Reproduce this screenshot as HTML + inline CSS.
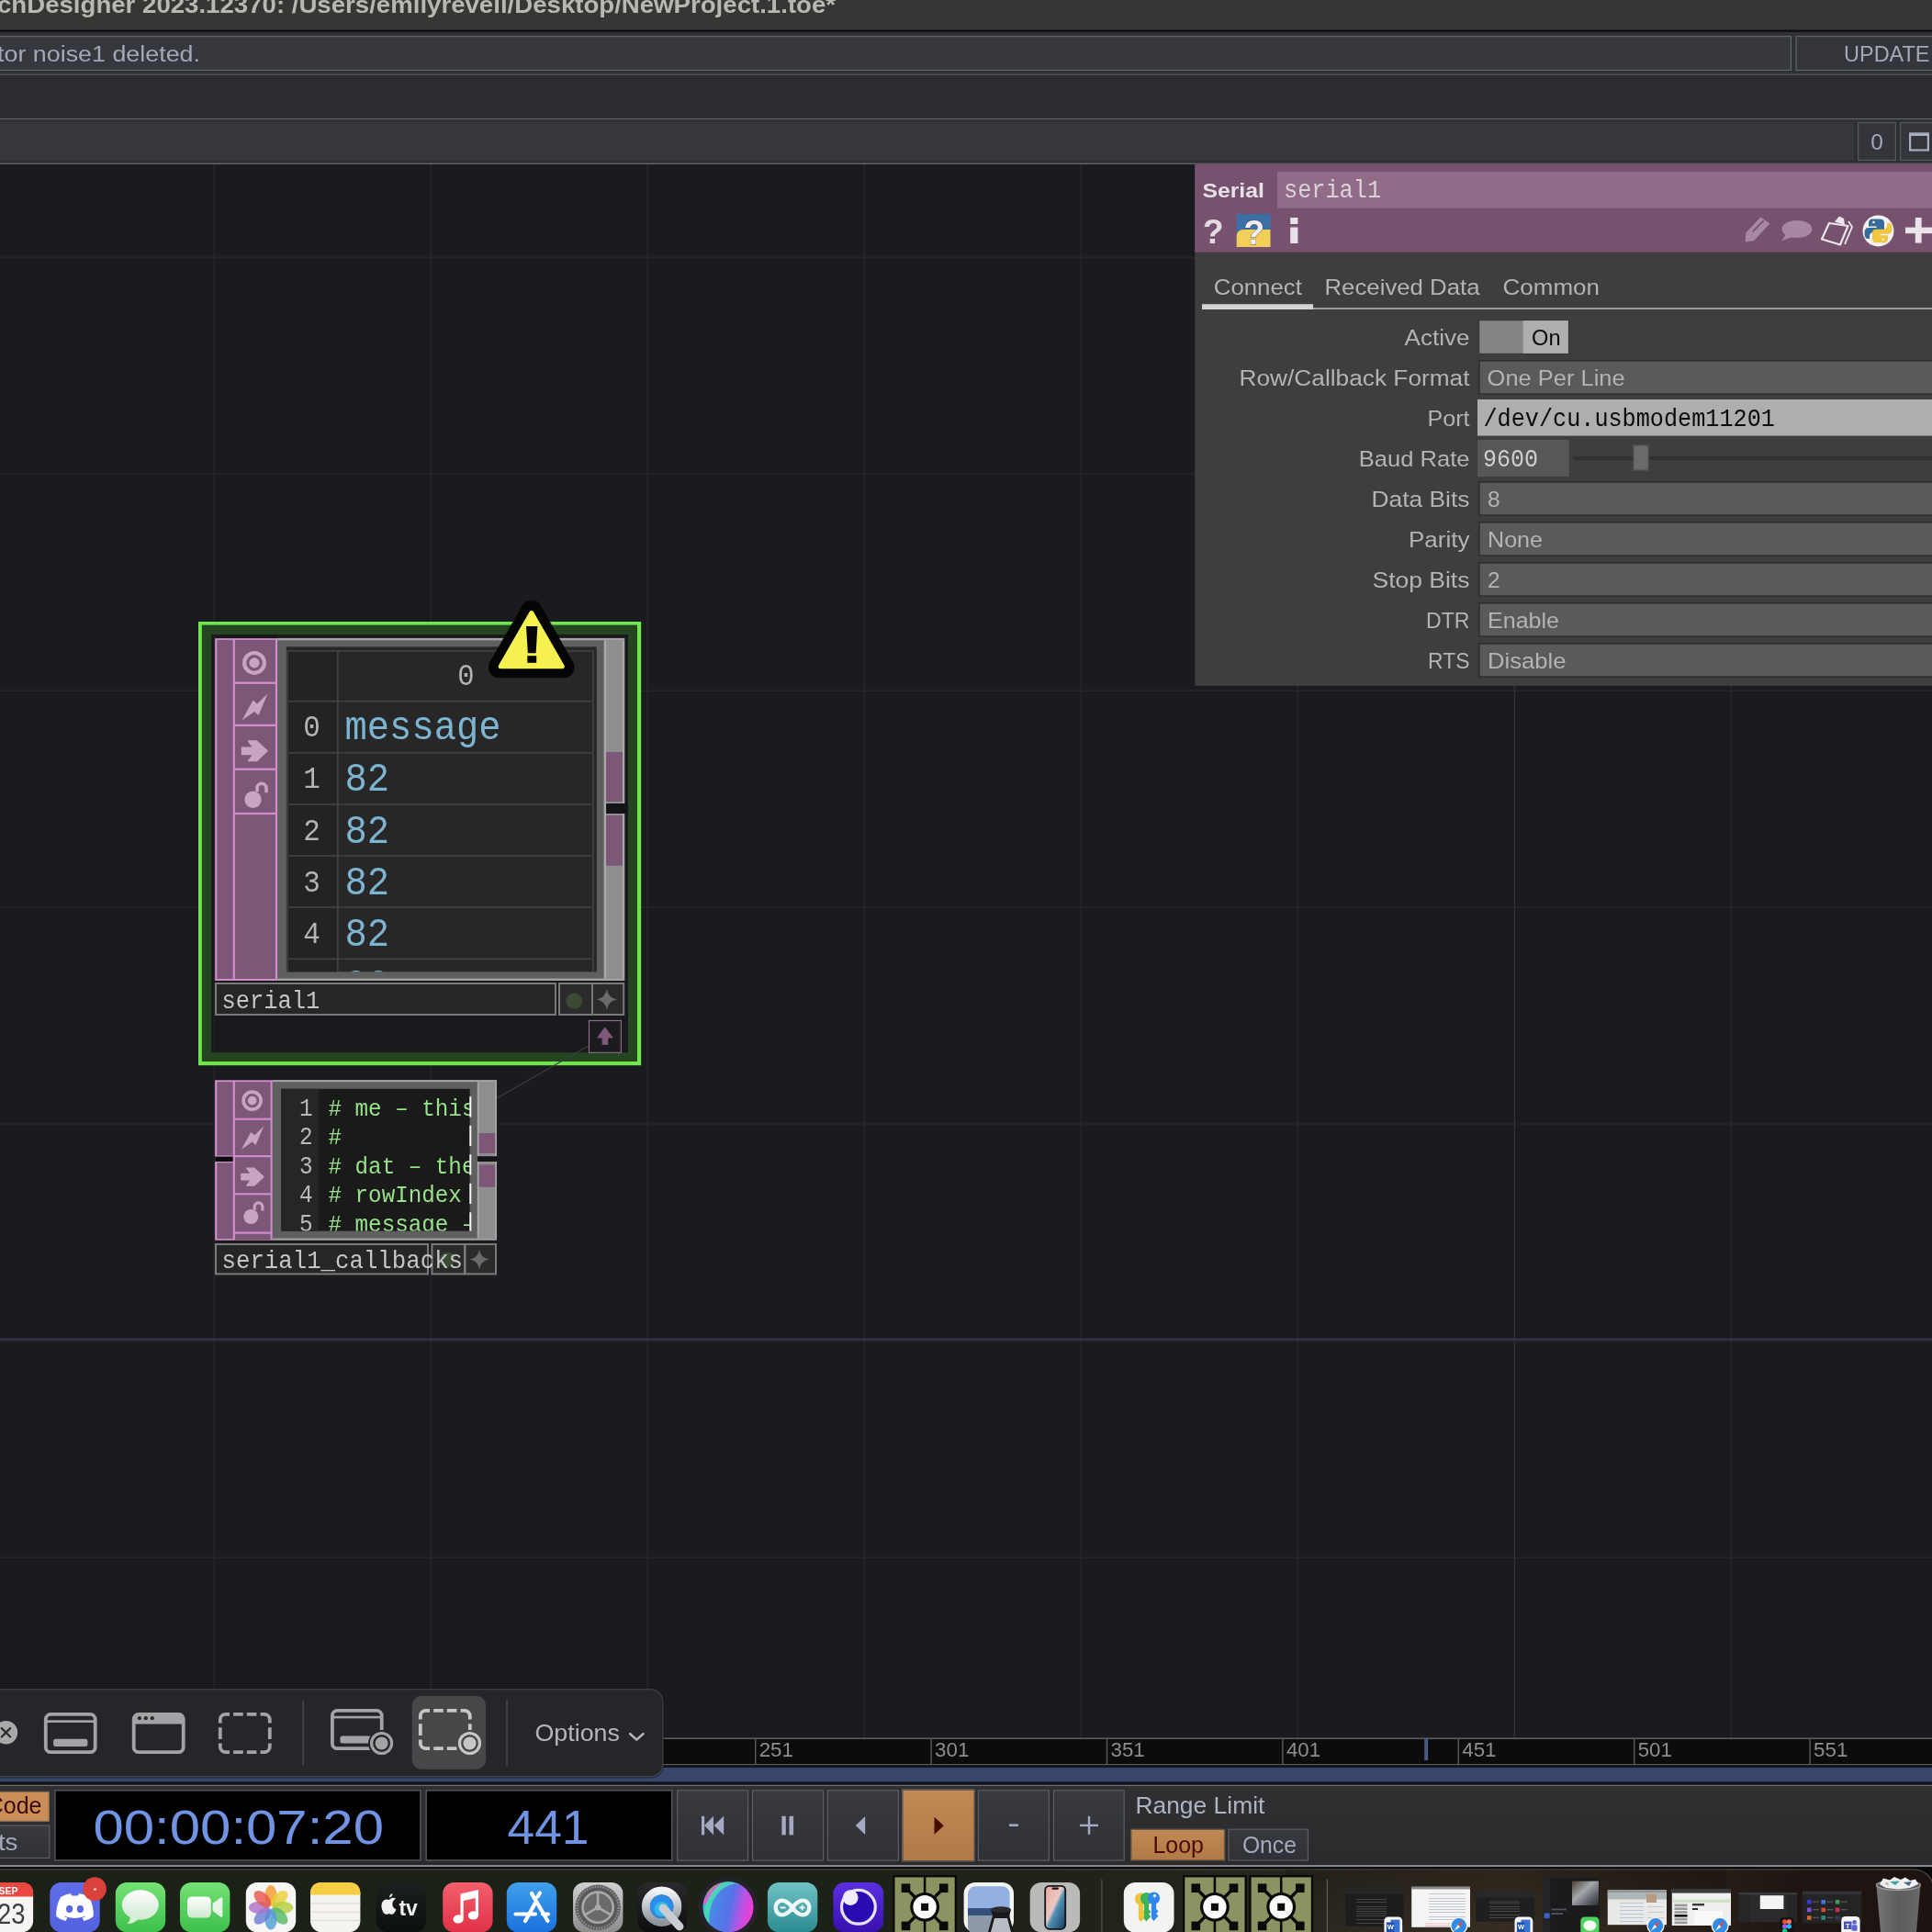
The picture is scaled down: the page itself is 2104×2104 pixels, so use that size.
<!DOCTYPE html>
<html><head><meta charset="utf-8"><title>TouchDesigner</title>
<style>
html,body{margin:0;padding:0;background:#1a1b1f;overflow:hidden;}
svg{display:block;will-change:transform;}
text{white-space:pre;}
</style></head><body>
<svg width="2104" height="2104" viewBox="0 0 2104 2104" font-family="Liberation Sans, sans-serif">
<rect x="0.0" y="0.0" width="2104.0" height="2104.0" fill="#1a1b1f" />
<rect x="0.0" y="0.0" width="2104.0" height="32.8" fill="#373634" />
<text transform="translate(-3,13.8) scale(1.105,1)" font-family="Liberation Sans, sans-serif" font-size="25" font-weight="bold" fill="#b9b7b4">chDesigner 2023.12370: /Users/emilyrevell/Desktop/NewProject.1.toe*</text>
<rect x="0.0" y="32.6" width="2104.0" height="2.2" fill="#0c0c0d" />
<rect x="0.0" y="34.8" width="2104.0" height="46.2" fill="#2f3135" />
<rect x="-4.40" y="39.60" width="1954.80" height="36.80" fill="#36383d" stroke="#62656c" stroke-width="1.2" />
<text transform="translate(-3.0,67.0) scale(1.0963,1)" textLength="201.6" lengthAdjust="spacing" font-family="Liberation Sans, sans-serif" font-size="24.5" font-weight="normal" fill="#a3a8b8" >tor noise1 deleted.</text>
<rect x="1956.10" y="39.60" width="163.30" height="36.80" fill="#33353a" stroke="#62656c" stroke-width="1.2" />
<text transform="translate(2008.0,67.0) scale(0.9584,1)" textLength="97.6" lengthAdjust="spacing" font-family="Liberation Sans, sans-serif" font-size="24.5" font-weight="normal" fill="#a3a8b8" >UPDATE</text>
<rect x="0.0" y="80.6" width="2104.0" height="1.2" fill="#66686e" />
<rect x="0.0" y="81.8" width="2104.0" height="47.2" fill="#2c2d30" />
<rect x="0.0" y="129.0" width="2104.0" height="1.2" fill="#66686e" />
<rect x="0.0" y="130.2" width="2104.0" height="47.8" fill="#2e3034" />
<rect x="0.0" y="132.5" width="2019.0" height="42.5" fill="#35373c" />
<rect x="2023.60" y="133.60" width="40.80" height="40.80" fill="#33353a" stroke="#55585f" stroke-width="1.2" />
<text x="2044.0" y="162.9" font-family="Liberation Sans, sans-serif" font-size="24.5" font-weight="normal" fill="#a3a8b8" text-anchor="middle" >0</text>
<rect x="2069.60" y="133.60" width="49.80" height="40.80" fill="#33353a" stroke="#55585f" stroke-width="1.2" />
<rect x="2079.0" y="144.4" width="22.0" height="3.6" fill="#a9aec2" />
<rect x="2080.1" y="146" width="19.8" height="17.5" fill="none" stroke="#a9aec2" stroke-width="2.2"/>
<rect x="0.0" y="177.6" width="2104.0" height="1.4" fill="#63656b" />
<rect x="0.0" y="179.0" width="2104.0" height="1714.0" fill="#1a1b1f" />
<rect x="232.8" y="179.0" width="1.2" height="1714.0" fill="#27282d" />
<rect x="468.8" y="179.0" width="1.2" height="1714.0" fill="#27282d" />
<rect x="704.8" y="179.0" width="1.2" height="1714.0" fill="#27282d" />
<rect x="940.8" y="179.0" width="1.2" height="1714.0" fill="#27282d" />
<rect x="1176.8" y="179.0" width="1.2" height="1714.0" fill="#27282d" />
<rect x="1412.8" y="179.0" width="1.2" height="1714.0" fill="#27282d" />
<rect x="1648.8" y="179.0" width="1.2" height="1714.0" fill="#31323b" />
<rect x="1884.8" y="179.0" width="1.2" height="1714.0" fill="#27282d" />
<rect x="0.0" y="279.5" width="2104.0" height="1.2" fill="#27282d" />
<rect x="0.0" y="515.4" width="2104.0" height="1.2" fill="#27282d" />
<rect x="0.0" y="751.6" width="2104.0" height="1.2" fill="#27282d" />
<rect x="0.0" y="987.5" width="2104.0" height="1.2" fill="#27282d" />
<rect x="0.0" y="1223.4" width="2104.0" height="1.2" fill="#27282d" />
<rect x="0.0" y="1695.6" width="2104.0" height="1.2" fill="#27282d" />
<rect x="0.0" y="1457.7" width="2104.0" height="1.8" fill="#39374f" />
<rect x="0.0" y="1459.5" width="2104.0" height="1.5" fill="#2a2838" />
<rect x="1301.2" y="178.5" width="802.8" height="568.4" fill="#3e3e3e" />
<rect x="1301.2" y="178.5" width="802.8" height="96.3" fill="#76526f" />
<rect x="1391.0" y="187.0" width="713.0" height="39.7" fill="#916c89" />
<text transform="translate(1309.4,214.6) scale(1.1263,1)" textLength="59.9" lengthAdjust="spacing" font-family="Liberation Sans, sans-serif" font-size="22" font-weight="bold" fill="#e8e1e7" >Serial</text>
<text transform="translate(1398.0,215.2) scale(0.9093,1)" font-family="Liberation Mono, monospace" font-size="27.77" fill="#ddd2da" text-anchor="start">serial1</text>
<text x="1309.8" y="265.0" font-family="Liberation Sans, sans-serif" font-size="37.5" font-weight="bold" fill="#e3dbe2" text-anchor="start" >?</text>
<rect x="1346.7" y="233.0" width="36.8" height="36.0" fill="#3b6fa6" />
<path d="M1346.7 269 L1346.7 257 Q1347 250.5 1354 250 L1383.5 250 L1383.5 269 Z" fill="#f2cf58" stroke="none" stroke-width="1" />
<text x="1354.2" y="265.5" font-family="Liberation Sans, sans-serif" font-size="37.5" font-weight="bold" fill="#f4eef3" text-anchor="start" stroke="#5a4a5a" stroke-width="0.8" paint-order="stroke">?</text>
<rect x="1405.2" y="237.0" width="8.2" height="7.0" fill="#e8e1e7" />
<rect x="1405.2" y="247.5" width="8.2" height="17.5" fill="#e8e1e7" />
<path d="M1917.4 236.6 L1927.4 243.5 L1910 262.2 L1900.6 263.4 L1901.3 253.4 Z" fill="#a787a2" stroke="none" stroke-width="1" />
<line x1="1908.7" y1="252.4" x2="1920.5" y2="240.4" stroke="#76526f" stroke-width="1.8" />
<ellipse cx="1957" cy="249.5" rx="16.5" ry="9.5" fill="#a787a2"/>
<path d="M1945 255 L1940 262.5 L1952 258 Z" fill="#a787a2" stroke="none" stroke-width="1" />
<path d="M1992 243 L2012.5 246 L2004 266.5 L1984 260.5 Z" fill="none" stroke="#ece6eb" stroke-width="2.2" stroke-linejoin="round"/>
<path d="M1998 241.5 L2003 235.5 L2008 238 L2009 245 Z" fill="#ece6eb" stroke="none" stroke-width="1" />
<path d="M2013 241 L2017 247 L2009 266" fill="none" stroke="#ece6eb" stroke-width="1.8" />
<circle cx="2045.5" cy="251.4" r="17" fill="#f4f2f4"/>
<path d="M2039 238.5 h8.5 q4.5 0 4.5 4.5 v6 q0 4 -4 4 h-7.5 q-4.5 0 -4.5 4.5 v2.5 h-2 q-3.5 0 -3.5 -6 q0 -6 4.5 -6 h8.5 v-1.5 h-8.5 v-3.5 q0 -4.5 4 -4.5 Z" fill="#366c9c" stroke="none" stroke-width="1" />
<path d="M2052 264.3 h-8.5 q-4.5 0 -4.5 -4.5 v-6 q0 -4 4 -4 h7.5 q4.5 0 4.5 -4.5 v-2.5 h2 q3.5 0 3.5 6 q0 6 -4.5 6 h-8.5 v1.5 h8.5 v3.5 q0 4.5 -4 4.5 Z" fill="#f0c73e" stroke="none" stroke-width="1" />
<circle cx="2040.5" cy="242" r="1.3" fill="#f4f2f4"/><circle cx="2050.5" cy="260.8" r="1.3" fill="#f4f2f4"/>
<rect x="2075.0" y="247.6" width="29.0" height="6.6" fill="#ebe4ea" />
<rect x="2085.8" y="237.0" width="6.8" height="27.6" fill="#ebe4ea" />
<text transform="translate(1321.8,321.0) scale(1.0520,1)" textLength="91.3" lengthAdjust="spacing" font-family="Liberation Sans, sans-serif" font-size="24.5" font-weight="normal" fill="#b4b4b4" >Connect</text>
<text transform="translate(1442.5,321.0) scale(1.0517,1)" textLength="160.7" lengthAdjust="spacing" font-family="Liberation Sans, sans-serif" font-size="24.5" font-weight="normal" fill="#b4b4b4" >Received Data</text>
<text transform="translate(1636.5,321.0) scale(1.0615,1)" textLength="99.4" lengthAdjust="spacing" font-family="Liberation Sans, sans-serif" font-size="24.5" font-weight="normal" fill="#b4b4b4" >Common</text>
<rect x="1309.0" y="335.0" width="795.0" height="2.0" fill="#9c9c9c" />
<rect x="1309.0" y="331.2" width="121.0" height="5.8" fill="#d2d2d2" />
<text transform="translate(1529.5,376.0) scale(1.0642,1)" textLength="66.7" lengthAdjust="spacing" font-family="Liberation Sans, sans-serif" font-size="24.5" font-weight="normal" fill="#b4b4b4" >Active</text>
<text transform="translate(1349.5,420.0) scale(1.0718,1)" textLength="234.2" lengthAdjust="spacing" font-family="Liberation Sans, sans-serif" font-size="24.5" font-weight="normal" fill="#b4b4b4" >Row/Callback Format</text>
<text transform="translate(1554.5,464.0) scale(1.0237,1)" textLength="44.9" lengthAdjust="spacing" font-family="Liberation Sans, sans-serif" font-size="24.5" font-weight="normal" fill="#b4b4b4" >Port</text>
<text transform="translate(1479.8,508.0) scale(1.0425,1)" textLength="115.8" lengthAdjust="spacing" font-family="Liberation Sans, sans-serif" font-size="24.5" font-weight="normal" fill="#b4b4b4" >Baud Rate</text>
<text transform="translate(1493.5,552.0) scale(1.0765,1)" textLength="99.4" lengthAdjust="spacing" font-family="Liberation Sans, sans-serif" font-size="24.5" font-weight="normal" fill="#b4b4b4" >Data Bits</text>
<text transform="translate(1534.0,596.0) scale(1.0619,1)" textLength="62.6" lengthAdjust="spacing" font-family="Liberation Sans, sans-serif" font-size="24.5" font-weight="normal" fill="#b4b4b4" >Parity</text>
<text transform="translate(1494.5,640.0) scale(1.0811,1)" textLength="98.0" lengthAdjust="spacing" font-family="Liberation Sans, sans-serif" font-size="24.5" font-weight="normal" fill="#b4b4b4" >Stop Bits</text>
<text transform="translate(1553.0,684.0) scale(0.9434,1)" textLength="50.4" lengthAdjust="spacing" font-family="Liberation Sans, sans-serif" font-size="24.5" font-weight="normal" fill="#b4b4b4" >DTR</text>
<text transform="translate(1555.0,728.0) scale(0.9370,1)" textLength="48.6" lengthAdjust="spacing" font-family="Liberation Sans, sans-serif" font-size="24.5" font-weight="normal" fill="#b4b4b4" >RTS</text>
<rect x="1610.60" y="348.60" width="97.80" height="36.80" fill="#858585" stroke="#373737" stroke-width="1.2" />
<rect x="1658.7" y="349.2" width="49.1" height="35.6" fill="#aeaeae" />
<text transform="translate(1668.0,376.0) scale(0.9638,1)" textLength="32.7" lengthAdjust="spacing" font-family="Liberation Sans, sans-serif" font-size="24.5" font-weight="normal" fill="#0a0a0a" >On</text>
<rect x="1610.85" y="392.85" width="508.30" height="36.30" fill="#5a5a5a" stroke="#2f2f2f" stroke-width="1.7" />
<text transform="translate(1619.6,420.0) scale(1.0390,1)" textLength="144.4" lengthAdjust="spacing" font-family="Liberation Sans, sans-serif" font-size="24.5" font-weight="normal" fill="#b4b4b4" >One Per Line</text>
<rect x="1609.0" y="435.0" width="495.0" height="39.6" fill="#aeaeae" />
<text transform="translate(1615.5,464.0) scale(0.9093,1)" font-family="Liberation Mono, monospace" font-size="27.71" fill="#0a0a0a" text-anchor="start">/dev/cu.usbmodem11201</text>
<rect x="1609.0" y="479.0" width="99.8" height="40.0" fill="#575757" />
<text transform="translate(1615.0,508.0) scale(0.9093,1)" font-family="Liberation Mono, monospace" font-size="27.50" fill="#cfcfcf" text-anchor="start">9600</text>
<rect x="1713.5" y="497.0" width="390.5" height="4.0" fill="#313131" />
<rect x="1778.75" y="484.75" width="16.50" height="27.50" fill="#6b6b6b" stroke="#4c4c4c" stroke-width="1.5" />
<rect x="1610.85" y="524.85" width="508.30" height="36.30" fill="#5a5a5a" stroke="#2f2f2f" stroke-width="1.7" />
<text x="1620.0" y="552.0" font-family="Liberation Sans, sans-serif" font-size="24.5" font-weight="normal" fill="#b4b4b4" text-anchor="start" >8</text>
<rect x="1610.85" y="568.85" width="508.30" height="36.30" fill="#5a5a5a" stroke="#2f2f2f" stroke-width="1.7" />
<text transform="translate(1620.0,596.0) scale(1.0244,1)" textLength="58.6" lengthAdjust="spacing" font-family="Liberation Sans, sans-serif" font-size="24.5" font-weight="normal" fill="#b4b4b4" >None</text>
<rect x="1610.85" y="612.85" width="508.30" height="36.30" fill="#5a5a5a" stroke="#2f2f2f" stroke-width="1.7" />
<text x="1620.0" y="640.0" font-family="Liberation Sans, sans-serif" font-size="24.5" font-weight="normal" fill="#b4b4b4" text-anchor="start" >2</text>
<rect x="1610.85" y="656.85" width="508.30" height="36.30" fill="#5a5a5a" stroke="#2f2f2f" stroke-width="1.7" />
<text transform="translate(1620.0,684.0) scale(1.0224,1)" textLength="76.3" lengthAdjust="spacing" font-family="Liberation Sans, sans-serif" font-size="24.5" font-weight="normal" fill="#b4b4b4" >Enable</text>
<rect x="1610.85" y="700.85" width="508.30" height="36.30" fill="#5a5a5a" stroke="#2f2f2f" stroke-width="1.7" />
<text transform="translate(1620.0,728.0) scale(1.0464,1)" textLength="81.7" lengthAdjust="spacing" font-family="Liberation Sans, sans-serif" font-size="24.5" font-weight="normal" fill="#b4b4b4" >Disable</text>
<rect x="216.0" y="677.0" width="482.2" height="483.2" fill="#6fe74c" />
<rect x="219.8" y="680.6" width="474.2" height="475.4" fill="#24451f" />
<rect x="230.2" y="691.0" width="453.8" height="455.2" fill="#18191d" />
<rect x="232.8" y="691.0" width="1.2" height="455.2" fill="#22232a" />
<rect x="234.2" y="695.2" width="446.0" height="372.8" fill="#5f5f60" />
<rect x="234.2" y="695.2" width="67.9" height="372.8" fill="#d08dc9" />
<rect x="236.3" y="696.9" width="17.4" height="369.1" fill="#7d5777" />
<rect x="255.9" y="696.9" width="44.0" height="45.6" fill="#7d5777" />
<rect x="255.9" y="744.9" width="44.0" height="43.8" fill="#7d5777" />
<rect x="255.9" y="791.1" width="44.0" height="45.4" fill="#7d5777" />
<rect x="255.9" y="838.9" width="44.0" height="46.0" fill="#7d5777" />
<rect x="255.9" y="887.1" width="44.0" height="178.9" fill="#7d5777" />
<circle cx="277.0" cy="721.9" r="10.9" fill="none" stroke="#c9a5c5" stroke-width="4.2"/><circle cx="277.0" cy="721.9" r="5.6" fill="#c9a5c5"/>
<polygon points="263.5,784.5 275.5,762.5 280.0,766.5 291.5,755.5 281.5,779.0 277.0,775.0" fill="#c9a5c5"/>
<polygon points="263.5,814.2 276.0,814.2 270.5,807.0 279.5,807.0 291.0,817.8 279.5,828.6 270.5,828.6 276.0,821.4 263.5,821.4" fill="#c9a5c5" stroke="#c9a5c5" stroke-width="1.5" stroke-linejoin="round"/>
<circle cx="275.5" cy="870.8" r="9.2" fill="#c9a5c5"/>
<path d="M280.0 862.3 v-4.0 a5.0 5.0 0 0 1 10.0 0 v5.0" fill="none" stroke="#c9a5c5" stroke-width="3.6"/>
<rect x="302.1" y="694.9" width="378.1" height="2.4" fill="#a3a3a5" />
<rect x="302.1" y="1065.6" width="378.1" height="2.4" fill="#a3a3a5" />
<rect x="657.7" y="697.3" width="22.5" height="368.3" fill="#a9a9ab" />
<rect x="660.1" y="697.3" width="17.8" height="368.3" fill="#8e8e8e" />
<rect x="660.1" y="819.0" width="17.8" height="54.0" fill="#7d5777" />
<rect x="660.1" y="888.0" width="17.8" height="54.7" fill="#7d5777" />
<rect x="660.1" y="875.0" width="23.9" height="11.0" fill="#131417" />
<rect x="311.8" y="704.4" width="338.0" height="353.9" fill="#272727" />
<rect x="313.2" y="709.0" width="53.3" height="349.3" fill="#232323" />
<rect x="313.0" y="708.0" width="333.6" height="1.8" fill="#404040" />
<rect x="313.0" y="762.8" width="333.6" height="1.8" fill="#404040" />
<rect x="313.0" y="818.9" width="333.6" height="1.8" fill="#404040" />
<rect x="313.0" y="875.1" width="333.6" height="1.8" fill="#404040" />
<rect x="313.0" y="931.1" width="333.6" height="1.8" fill="#404040" />
<rect x="313.0" y="987.1" width="333.6" height="1.8" fill="#404040" />
<rect x="313.0" y="1043.4" width="333.6" height="1.8" fill="#404040" />
<rect x="312.3" y="708.0" width="1.8" height="350.3" fill="#404040" />
<rect x="366.9" y="708.0" width="1.8" height="350.3" fill="#404040" />
<rect x="645.0" y="708.0" width="1.8" height="350.3" fill="#404040" />
<clipPath id="tclip"><rect x="311.8" y="704.4" width="338" height="353.9"/></clipPath><g clip-path="url(#tclip)">
<text transform="translate(507.5,745.6) scale(0.9093,1)" font-family="Liberation Mono, monospace" font-size="33.54" fill="#b4b4b4" text-anchor="middle" >0</text>
<text transform="translate(339.5,802.3) scale(0.9093,1)" font-family="Liberation Mono, monospace" font-size="34.09" fill="#b4b4b4" text-anchor="middle" >0</text>
<text transform="translate(375.5,805.3) scale(0.9093,1)" font-family="Liberation Mono, monospace" font-size="44.54" fill="#7cb4d1" text-anchor="start" >message</text>
<text transform="translate(339.5,858.4) scale(0.9093,1)" font-family="Liberation Mono, monospace" font-size="34.09" fill="#b4b4b4" text-anchor="middle" >1</text>
<text transform="translate(375.5,861.4) scale(0.9093,1)" font-family="Liberation Mono, monospace" font-size="44.54" fill="#7cb4d1" text-anchor="start" >82</text>
<text transform="translate(339.5,914.6) scale(0.9093,1)" font-family="Liberation Mono, monospace" font-size="34.09" fill="#b4b4b4" text-anchor="middle" >2</text>
<text transform="translate(375.5,917.6) scale(0.9093,1)" font-family="Liberation Mono, monospace" font-size="44.54" fill="#7cb4d1" text-anchor="start" >82</text>
<text transform="translate(339.5,970.6) scale(0.9093,1)" font-family="Liberation Mono, monospace" font-size="34.09" fill="#b4b4b4" text-anchor="middle" >3</text>
<text transform="translate(375.5,973.6) scale(0.9093,1)" font-family="Liberation Mono, monospace" font-size="44.54" fill="#7cb4d1" text-anchor="start" >82</text>
<text transform="translate(339.5,1026.6) scale(0.9093,1)" font-family="Liberation Mono, monospace" font-size="34.09" fill="#b4b4b4" text-anchor="middle" >4</text>
<text transform="translate(375.5,1029.6) scale(0.9093,1)" font-family="Liberation Mono, monospace" font-size="44.54" fill="#7cb4d1" text-anchor="start" >82</text>
<text transform="translate(375.5,1085.9) scale(0.9093,1)" font-family="Liberation Mono, monospace" font-size="44.54" fill="#7cb4d1" text-anchor="start" >82</text>
</g>
<rect x="235.00" y="1071.00" width="370.00" height="34.00" fill="#262626" stroke="#7a7a7a" stroke-width="2" />
<text transform="translate(241.5,1097.6) scale(0.9093,1)" font-family="Liberation Mono, monospace" font-size="27.95" fill="#c6c6c6" text-anchor="start" >serial1</text>
<rect x="609.00" y="1071.00" width="36.00" height="34.00" fill="#2b2b2b" stroke="#7a7a7a" stroke-width="2" />
<rect x="645.00" y="1071.00" width="34.20" height="34.00" fill="#2b2b2b" stroke="#7a7a7a" stroke-width="2" />
<circle cx="625.3" cy="1090" r="8.8" fill="#3c4935"/>
<path d="M660.8 1077 Q662.3 1087 672 1088.5 Q662.3 1090 660.8 1100 Q659.3 1090 649.6 1088.5 Q659.3 1087 660.8 1077 Z" fill="#6b6b6b" stroke="none" stroke-width="1" />
<line x1="520.0" y1="1208.0" x2="653.0" y2="1132.0" stroke="#3c3d42" stroke-width="1.2" />
<rect x="641.50" y="1111.50" width="34.90" height="34.80" fill="#1a1b1f" stroke="#8b6c88" stroke-width="1.2" />
<path d="M658.8 1119.4 L667 1130 L661.6 1130 L661.6 1137.2 L656.2 1137.2 L656.2 1130 L650.8 1130 Z" fill="#80587a" stroke="#80587a" stroke-width="1.2" stroke-linejoin="round"/>
<path d="M578.8 665 L614 726.8 L543.4 726.8 Z" fill="#050505" stroke="#050505" stroke-width="23" stroke-linejoin="round"/>
<path d="M578.8 667.5 L612.3 725.8 L545.2 725.8 Z" fill="#f4f150" stroke="#f4f150" stroke-width="5" stroke-linejoin="round"/>
<path d="M573 682 L585.4 682 L583.6 711.3 L574.8 711.3 Z" fill="#050505" stroke="none" stroke-width="1" />
<rect x="574.3" y="714.2" width="9.9" height="7.6" fill="#050505" />
<rect x="234.2" y="1176.4" width="306.8" height="174.2" fill="#5f5f60" />
<rect x="234.2" y="1176.4" width="62.4" height="174.2" fill="#d08dc9" />
<rect x="236.3" y="1178.2" width="17.4" height="80.2" fill="#7d5777" />
<rect x="236.3" y="1266.2" width="17.4" height="82.8" fill="#7d5777" />
<rect x="234.2" y="1259.6" width="19.5" height="5.4" fill="#0a0a0b" />
<rect x="255.9" y="1178.2" width="38.7" height="39.4" fill="#7d5777" />
<rect x="255.9" y="1219.8" width="38.7" height="38.2" fill="#7d5777" />
<rect x="255.9" y="1260.2" width="38.7" height="39.0" fill="#7d5777" />
<rect x="255.9" y="1301.4" width="38.7" height="40.1" fill="#7d5777" />
<rect x="255.9" y="1343.7" width="38.7" height="6.9" fill="#7d5777" />
<circle cx="274.6" cy="1198.6" r="9.5" fill="none" stroke="#c9a5c5" stroke-width="3.7"/><circle cx="274.6" cy="1198.6" r="4.9" fill="#c9a5c5"/>
<polygon points="262.9,1251.8 273.3,1232.7 277.2,1236.2 287.2,1226.6 278.5,1247.1 274.6,1243.6" fill="#c9a5c5"/>
<polygon points="262.9,1278.5 273.7,1278.5 268.9,1272.2 276.8,1272.2 286.8,1281.6 276.8,1291.0 268.9,1291.0 273.7,1284.7 262.9,1284.7" fill="#c9a5c5" stroke="#c9a5c5" stroke-width="1.5" stroke-linejoin="round"/>
<circle cx="273.3" cy="1325.0" r="8.0" fill="#c9a5c5"/>
<path d="M277.2 1317.7 v-3.5 a4.3 4.3 0 0 1 8.7 0 v4.3" fill="none" stroke="#c9a5c5" stroke-width="3.1"/>
<rect x="296.6" y="1176.1" width="244.4" height="2.1" fill="#a3a3a5" />
<rect x="296.6" y="1348.6" width="244.4" height="2.0" fill="#a3a3a5" />
<rect x="519.8" y="1178.2" width="21.2" height="170.4" fill="#a9a9ab" />
<rect x="521.6" y="1178.2" width="17.6" height="170.4" fill="#8e8e8e" />
<rect x="521.6" y="1234.0" width="17.6" height="22.0" fill="#7d5777" />
<rect x="521.6" y="1268.4" width="17.6" height="24.3" fill="#7d5777" />
<rect x="519.8" y="1259.2" width="21.2" height="5.8" fill="#131417" />
<rect x="306.3" y="1185.8" width="205.3" height="154.8" fill="#1a1a1a" />
<rect x="306.3" y="1185.8" width="40.7" height="154.8" fill="#262626" />
<clipPath id="eclip"><rect x="306.3" y="1185.8" width="205.3" height="154.8"/></clipPath><g clip-path="url(#eclip)">
<text transform="translate(340.5,1214.8) scale(0.9093,1)" font-family="Liberation Mono, monospace" font-size="26.76" fill="#b9b9b9" text-anchor="end" >1</text>
<text transform="translate(357.5,1214.8) scale(0.9093,1)" font-family="Liberation Mono, monospace" font-size="26.67" fill="#98e18b" text-anchor="start" ># me – this</text>
<text transform="translate(340.5,1246.3) scale(0.9093,1)" font-family="Liberation Mono, monospace" font-size="26.76" fill="#b9b9b9" text-anchor="end" >2</text>
<text transform="translate(357.5,1246.3) scale(0.9093,1)" font-family="Liberation Mono, monospace" font-size="26.67" fill="#98e18b" text-anchor="start" >#</text>
<text transform="translate(340.5,1277.8) scale(0.9093,1)" font-family="Liberation Mono, monospace" font-size="26.76" fill="#b9b9b9" text-anchor="end" >3</text>
<text transform="translate(357.5,1277.8) scale(0.9093,1)" font-family="Liberation Mono, monospace" font-size="26.67" fill="#98e18b" text-anchor="start" ># dat – the</text>
<text transform="translate(340.5,1309.3) scale(0.9093,1)" font-family="Liberation Mono, monospace" font-size="26.76" fill="#b9b9b9" text-anchor="end" >4</text>
<text transform="translate(357.5,1309.3) scale(0.9093,1)" font-family="Liberation Mono, monospace" font-size="26.67" fill="#98e18b" text-anchor="start" ># rowIndex –</text>
<text transform="translate(340.5,1340.8) scale(0.9093,1)" font-family="Liberation Mono, monospace" font-size="26.76" fill="#b9b9b9" text-anchor="end" >5</text>
<text transform="translate(357.5,1340.8) scale(0.9093,1)" font-family="Liberation Mono, monospace" font-size="26.67" fill="#98e18b" text-anchor="start" ># message –</text>
</g>
<line x1="512.3" y1="1194.2" x2="512.3" y2="1340.6" stroke="#f4f4f4" stroke-width="2.0" stroke-dasharray="22.2 9.3"/>
<rect x="235.00" y="1355.00" width="231.00" height="32.40" fill="#262626" stroke="#7a7a7a" stroke-width="2" />
<rect x="470.50" y="1355.00" width="35.50" height="32.40" fill="#2b2b2b" stroke="#7a7a7a" stroke-width="2" />
<rect x="506.50" y="1355.00" width="33.50" height="32.40" fill="#2b2b2b" stroke="#7a7a7a" stroke-width="2" />
<circle cx="487" cy="1372" r="8.5" fill="#3c4935"/>
<path d="M522 1360.5 Q523.4 1370 532.5 1371.5 Q523.4 1373 522 1382.5 Q520.6 1373 511.5 1371.5 Q520.6 1370 522 1360.5 Z" fill="#6b6b6b" stroke="none" stroke-width="1" />
<text transform="translate(241.5,1380.6) scale(0.9093,1)" font-family="Liberation Mono, monospace" font-size="28.32" fill="#c6c6c6" text-anchor="start" >serial1_callbacks</text>
<rect x="0.0" y="1892.6" width="2104.0" height="29.6" fill="#747476" />
<rect x="0.0" y="1893.8" width="2104.0" height="27.4" fill="#0c0c0d" />
<rect x="630.6" y="1893.8" width="1.4" height="27.4" fill="#5a5a5c" />
<text transform="translate(635.3,1913.4) scale(1.0370,1)" textLength="35.9" lengthAdjust="spacing" font-family="Liberation Sans, sans-serif" font-size="21.5" font-weight="normal" fill="#8e8e8e" >201</text>
<rect x="822.0" y="1893.8" width="1.4" height="27.4" fill="#5a5a5c" />
<text transform="translate(826.7,1913.4) scale(1.0370,1)" textLength="35.9" lengthAdjust="spacing" font-family="Liberation Sans, sans-serif" font-size="21.5" font-weight="normal" fill="#8e8e8e" >251</text>
<rect x="1013.4" y="1893.8" width="1.4" height="27.4" fill="#5a5a5c" />
<text transform="translate(1018.1,1913.4) scale(1.0370,1)" textLength="35.9" lengthAdjust="spacing" font-family="Liberation Sans, sans-serif" font-size="21.5" font-weight="normal" fill="#8e8e8e" >301</text>
<rect x="1204.8" y="1893.8" width="1.4" height="27.4" fill="#5a5a5c" />
<text transform="translate(1209.5,1913.4) scale(1.0370,1)" textLength="35.9" lengthAdjust="spacing" font-family="Liberation Sans, sans-serif" font-size="21.5" font-weight="normal" fill="#8e8e8e" >351</text>
<rect x="1396.2" y="1893.8" width="1.4" height="27.4" fill="#5a5a5c" />
<text transform="translate(1400.9,1913.4) scale(1.0370,1)" textLength="35.9" lengthAdjust="spacing" font-family="Liberation Sans, sans-serif" font-size="21.5" font-weight="normal" fill="#8e8e8e" >401</text>
<rect x="1587.6" y="1893.8" width="1.4" height="27.4" fill="#5a5a5c" />
<text transform="translate(1592.3,1913.4) scale(1.0370,1)" textLength="35.9" lengthAdjust="spacing" font-family="Liberation Sans, sans-serif" font-size="21.5" font-weight="normal" fill="#8e8e8e" >451</text>
<rect x="1779.0" y="1893.8" width="1.4" height="27.4" fill="#5a5a5c" />
<text transform="translate(1783.7,1913.4) scale(1.0370,1)" textLength="35.9" lengthAdjust="spacing" font-family="Liberation Sans, sans-serif" font-size="21.5" font-weight="normal" fill="#8e8e8e" >501</text>
<rect x="1970.4" y="1893.8" width="1.4" height="27.4" fill="#5a5a5c" />
<text transform="translate(1975.1,1913.4) scale(1.0370,1)" textLength="35.9" lengthAdjust="spacing" font-family="Liberation Sans, sans-serif" font-size="21.5" font-weight="normal" fill="#8e8e8e" >551</text>
<rect x="2161.8" y="1893.8" width="1.4" height="27.4" fill="#5a5a5c" />
<text transform="translate(2166.5,1913.4) scale(1.0370,1)" textLength="35.9" lengthAdjust="spacing" font-family="Liberation Sans, sans-serif" font-size="21.5" font-weight="normal" fill="#8e8e8e" >601</text>
<rect x="1551.2" y="1892.8" width="3.9" height="24.2" fill="#4c5884" />
<rect x="0.0" y="1922.2" width="2104.0" height="2.8" fill="#15161b" />
<rect x="0.0" y="1925.0" width="2104.0" height="15.6" fill="#38466b" />
<rect x="0.0" y="1940.6" width="2104.0" height="3.2" fill="#121318" />
<rect x="0.0" y="1943.8" width="2104.0" height="1.3" fill="#6e6e71" />
<linearGradient id="tg" x1="0" y1="0" x2="0" y2="1"><stop offset="0" stop-color="#303032"/><stop offset="1" stop-color="#2b2b2d"/></linearGradient>
<linearGradient id="bg" x1="0" y1="0" x2="0" y2="1"><stop offset="0" stop-color="#383a40"/><stop offset="1" stop-color="#2f3136"/></linearGradient>
<linearGradient id="og" x1="0" y1="0" x2="0" y2="1"><stop offset="0" stop-color="#c08a56"/><stop offset="1" stop-color="#b07a48"/></linearGradient>
<rect x="0.0" y="1945.0" width="2104.0" height="86.4" fill="url(#tg)" />
<rect x="0.0" y="2031.0" width="2104.0" height="2.2" fill="#87888b" />
<rect x="0.0" y="2033.2" width="2104.0" height="1.8" fill="#0a0a0a" />
<rect x="-4.40" y="1951.30" width="57.80" height="32.10" fill="#c98d55" stroke="#7a6a55" stroke-width="1.2" />
<text x="-14.3" y="1975.3" font-family="Liberation Sans, sans-serif" font-size="25" font-weight="normal" fill="#3a0906" text-anchor="start" >Code</text>
<rect x="-4.40" y="1988.00" width="58.20" height="35.40" fill="url(#bg)" stroke="#5b5d64" stroke-width="1.2" />
<text transform="translate(-2.0,2015.4) scale(1.1056,1)" textLength="19.4" lengthAdjust="spacing" font-family="Liberation Sans, sans-serif" font-size="25" font-weight="normal" fill="#a5aaba" >ts</text>
<rect x="59.95" y="1949.85" width="397.90" height="76.00" fill="#000000" stroke="#5b5d64" stroke-width="1.3" />
<text transform="translate(101.5,2008.4) scale(1.1747,1)" textLength="269.4" lengthAdjust="spacing" font-family="Liberation Sans, sans-serif" font-size="51" font-weight="normal" fill="#7094e3" >00:00:07:20</text>
<rect x="464.15" y="1949.85" width="267.60" height="76.00" fill="#000000" stroke="#5b5d64" stroke-width="1.3" />
<text transform="translate(552.5,2008.4) scale(1.0459,1)" textLength="85.1" lengthAdjust="spacing" font-family="Liberation Sans, sans-serif" font-size="51" font-weight="normal" fill="#7094e3" >441</text>
<rect x="737.60" y="1949.80" width="77.00" height="76.30" fill="url(#bg)" stroke="#5b5d64" stroke-width="1.2" />
<rect x="819.50" y="1949.80" width="77.10" height="76.30" fill="url(#bg)" stroke="#5b5d64" stroke-width="1.2" />
<rect x="901.40" y="1949.80" width="77.00" height="76.30" fill="url(#bg)" stroke="#5b5d64" stroke-width="1.2" />
<rect x="982.55" y="1948.75" width="78.70" height="78.20" fill="#2f3135" stroke="#5b5d64" stroke-width="1.1" />
<rect x="983.4" y="1949.6" width="77.2" height="76.6" fill="url(#og)" />
<rect x="1065.40" y="1949.80" width="77.00" height="76.30" fill="url(#bg)" stroke="#5b5d64" stroke-width="1.2" />
<rect x="1147.50" y="1949.80" width="76.70" height="76.30" fill="url(#bg)" stroke="#5b5d64" stroke-width="1.2" />
<rect x="764.0" y="1977.8" width="3.2" height="20.5" fill="#a5aac2" />
<path d="M767.1 1988 L777 1977.8 L777 1998.3 Z" fill="#a5aac2" stroke="none" stroke-width="1" />
<path d="M777.6 1988 L788.2 1977.8 L788.2 1998.3 Z" fill="#a5aac2" stroke="none" stroke-width="1" />
<rect x="851.4" y="1977.8" width="4.4" height="20.5" fill="#a5aac2" />
<rect x="859.5" y="1977.8" width="4.6" height="20.5" fill="#a5aac2" />
<path d="M931.8 1988 L942.2 1978 L942.2 1998 Z" fill="#a5aac2" stroke="none" stroke-width="1" />
<path d="M1027.8 1988.2 L1017.5 1978.7 L1017.5 1997.8 Z" fill="#480c07" stroke="none" stroke-width="1" />
<rect x="1099.0" y="1986.4" width="9.8" height="2.6" fill="#a5aac2" />
<rect x="1176.0" y="1986.7" width="20.0" height="2.4" fill="#a5aac2" />
<rect x="1184.8" y="1977.9" width="2.4" height="19.9" fill="#a5aac2" />
<text transform="translate(1236.4,1975.3) scale(1.0570,1)" textLength="133.4" lengthAdjust="spacing" font-family="Liberation Sans, sans-serif" font-size="25" font-weight="normal" fill="#aeb3c2" >Range Limit</text>
<rect x="1231.90" y="1992.30" width="101.60" height="33.50" fill="url(#og)" stroke="#6b5a48" stroke-width="1.4" />
<text transform="translate(1255.5,2017.5) scale(0.9979,1)" textLength="55.6" lengthAdjust="spacing" font-family="Liberation Sans, sans-serif" font-size="25" font-weight="normal" fill="#480c07" >Loop</text>
<rect x="1337.90" y="1992.20" width="86.50" height="33.70" fill="url(#bg)" stroke="#5b5d64" stroke-width="1.2" />
<text transform="translate(1352.9,2017.5) scale(0.9874,1)" textLength="59.8" lengthAdjust="spacing" font-family="Liberation Sans, sans-serif" font-size="25" font-weight="normal" fill="#a5aaba" >Once</text>
<rect x="-30" y="1838.6" width="753.6" height="98" rx="15" fill="#000" opacity="0.35"/>
<rect x="-30" y="1839.7" width="752" height="95" rx="13.5" fill="#252629" stroke="#424246" stroke-width="1.3"/>
<circle cx="6.5" cy="1886.8" r="12.7" fill="#a9a9ab"/>
<path d="M1.8 1882.1 L11.2 1891.5 M11.2 1882.1 L1.8 1891.5" fill="none" stroke="#2a2a2c" stroke-width="2.2" stroke-linecap="round"/>
<rect x="49.8" y="1866.9" width="53.9" height="41.3" rx="5.5" fill="none" stroke="#a3a3a5" stroke-width="3.8"/>
<rect x="50.0" y="1873.3" width="53.5" height="2.7" fill="#a3a3a5" />
<rect x="58.1" y="1893.7" width="37.3" height="8.4" rx="2.5" fill="#a3a3a5"/>
<rect x="145.7" y="1866.9" width="54" height="41.3" rx="5.5" fill="none" stroke="#a3a3a5" stroke-width="3.8"/>
<path d="M145 1877.5 L145 1871 Q145 1865.5 150.5 1865.5 L195 1865.5 Q200.6 1865.5 200.6 1871 L200.6 1877.5 Z" fill="#a3a3a5" stroke="none" stroke-width="1" />
<circle cx="151.9" cy="1871.2" r="2.1" fill="#2a2a2c"/>
<circle cx="158.8" cy="1871.2" r="2.1" fill="#2a2a2c"/>
<circle cx="165.8" cy="1871.2" r="2.1" fill="#2a2a2c"/>
<path d="M239.8 1876.5 L239.8 1872.9 A6 6 0 0 1 245.8 1866.9 L250.0 1866.9 M283.6 1866.9 L287.8 1866.9 A6 6 0 0 1 293.8 1872.9 L293.8 1876.5 M293.8 1898.6000000000001 L293.8 1902.2 A6 6 0 0 1 287.8 1908.2 L283.6 1908.2 M250.0 1908.2 L245.8 1908.2 A6 6 0 0 1 239.8 1902.2 L239.8 1898.6000000000001 M254.20000000000002 1866.9 L264.8 1866.9 M268.8 1866.9 L279.40000000000003 1866.9 M254.20000000000002 1908.2 L264.8 1908.2 M268.8 1908.2 L279.40000000000003 1908.2 M239.8 1881.15 L239.8 1893.9500000000003 M293.8 1881.15 L293.8 1893.9500000000003 " fill="none" stroke="#a3a3a5" stroke-width="3.8" />
<rect x="329.5" y="1851.4" width="1.5" height="71.2" fill="#48484b" />
<rect x="361.9" y="1862.9" width="53.8" height="41.3" rx="5.5" fill="none" stroke="#a3a3a5" stroke-width="3.8"/>
<rect x="362.0" y="1868.8" width="53.5" height="2.6" fill="#a3a3a5" />
<rect x="370.4" y="1890.4" width="34" height="8.2" rx="2.5" fill="#a3a3a5"/>
<circle cx="415.6" cy="1898.5" r="14.6" fill="#252629"/><circle cx="415.6" cy="1898.5" r="11" fill="none" stroke="#a3a3a5" stroke-width="3.2"/><circle cx="415.6" cy="1898.5" r="7" fill="#a3a3a5"/>
<rect x="448.7" y="1847" width="80.4" height="79.7" rx="10" fill="#464749"/>
<path d="M457.8 1872.5 L457.8 1868.9 A6 6 0 0 1 463.8 1862.9 L468.0 1862.9 M501.6 1862.9 L505.8 1862.9 A6 6 0 0 1 511.8 1868.9 L511.8 1872.5 M511.8 1894.6000000000001 L511.8 1898.2 A6 6 0 0 1 505.8 1904.2 L501.6 1904.2 M468.0 1904.2 L463.8 1904.2 A6 6 0 0 1 457.8 1898.2 L457.8 1894.6000000000001 M472.2 1862.9 L482.8 1862.9 M486.8 1862.9 L497.40000000000003 1862.9 M472.2 1904.2 L482.8 1904.2 M486.8 1904.2 L497.40000000000003 1904.2 M457.8 1877.15 L457.8 1889.9500000000003 M511.8 1877.15 L511.8 1889.9500000000003 " fill="none" stroke="#c6c6c8" stroke-width="3.8" />
<circle cx="511.5" cy="1898.5" r="14.6" fill="#464749"/><circle cx="511.5" cy="1898.5" r="11" fill="none" stroke="#c6c6c8" stroke-width="3.2"/><circle cx="511.5" cy="1898.5" r="7" fill="#c6c6c8"/>
<rect x="551.3" y="1851.0" width="1.5" height="72.0" fill="#48484b" />
<text transform="translate(582.4,1895.9) scale(1.0323,1)" textLength="89.6" lengthAdjust="spacing" font-family="Liberation Sans, sans-serif" font-size="26" font-weight="normal" fill="#b6b6b8" >Options</text>
<path d="M686.2 1888.2 L693.3 1894.6 L700.4 1888.2" fill="none" stroke="#b6b6b8" stroke-width="2.6" stroke-linecap="round" stroke-linejoin="round"/>
<linearGradient id="dk" x1="0" y1="0" x2="1" y2="0">
<stop offset="0" stop-color="#1b2117"/><stop offset="0.45" stop-color="#1c2218"/><stop offset="0.62" stop-color="#23241b"/>
<stop offset="0.70" stop-color="#2e2920"/><stop offset="0.78" stop-color="#372d21"/><stop offset="0.86" stop-color="#2a221b"/><stop offset="0.93" stop-color="#1f1613"/><stop offset="1" stop-color="#1d1411"/></linearGradient>
<rect x="0.0" y="2034.6" width="2104.0" height="69.4" fill="#060606" />
<path d="M-10 2035.8 L2084 2035.8 A22 22 0 0 1 2106 2058 L2106 2110 L-10 2110 Z" fill="url(#dk)" stroke="#45463f" stroke-width="1.3"/>
<linearGradient id="dkv" x1="0" y1="0" x2="0" y2="1"><stop offset="0" stop-color="#000" stop-opacity="0.2"/><stop offset="1" stop-color="#000" stop-opacity="0"/></linearGradient>
<rect x="1400.0" y="2036.0" width="480.0" height="68.0" fill="url(#dkv)" />
<rect x="-18.3" y="2049.9" width="54.4" height="54.4" rx="12.5" fill="#f6f5f3" />
<path d="M-18.3 2065.6 L-18.3 2062 Q-18.3 2049.9 -6 2049.9 L24 2049.9 Q36.1 2049.9 36.1 2062 L36.1 2065.6 Z" fill="#e9473f" stroke="none" stroke-width="1" />
<text transform="translate(-1.5,2063.2) scale(0.9126,1)" textLength="23.0" lengthAdjust="spacing" font-family="Liberation Sans, sans-serif" font-size="11.5" font-weight="bold" fill="#ffffff" >SEP</text>
<text transform="translate(-3.0,2094.6) scale(0.8845,1)" textLength="34.5" lengthAdjust="spacing" font-family="Liberation Sans, sans-serif" font-size="31" font-weight="normal" fill="#3c3c3e" >23</text>
<linearGradient id="g_dis" x1="0" y1="0" x2="0" y2="1"><stop offset="0" stop-color="#5f6ee8"/><stop offset="1" stop-color="#5462e0"/></linearGradient>
<rect x="54.3" y="2049.9" width="54.4" height="54.4" rx="12.5" fill="url(#g_dis)" />
<path d="M66 2066 Q73 2062 77 2062.2 L78.3 2064.6 Q81.5 2064.2 84.7 2064.6 L86 2062.2 Q90 2062 97 2066 Q102.5 2076 101.7 2087 Q97 2091 91.5 2092 L89.6 2088.6 Q93 2087.4 93.6 2086.6 Q81.5 2091.5 69.4 2086.6 Q70 2087.4 73.4 2088.6 L71.5 2092 Q66 2091 61.3 2087 Q60.5 2076 66 2066 Z" fill="#ffffff" stroke="none" stroke-width="1" />
<ellipse cx="75.6" cy="2079" rx="3.6" ry="4.1" fill="#5a68e4"/><ellipse cx="87.4" cy="2079" rx="3.6" ry="4.1" fill="#5a68e4"/>
<circle cx="103.1" cy="2057.1" r="12.8" fill="#da413b"/><circle cx="103.4" cy="2057.6" r="1.4" fill="#f6e9e8"/>
<linearGradient id="g_msg" x1="0" y1="0" x2="0" y2="1"><stop offset="0" stop-color="#74e274"/><stop offset="1" stop-color="#3cc04c"/></linearGradient>
<rect x="125.8" y="2049.9" width="54.4" height="54.4" rx="12.5" fill="url(#g_msg)" />
<linearGradient id="g_wh" x1="0" y1="0" x2="0" y2="1"><stop offset="0" stop-color="#ffffff"/><stop offset="1" stop-color="#cfe9cf"/></linearGradient>
<ellipse cx="152.8" cy="2074.5" rx="20" ry="16.2" fill="url(#g_wh)"/>
<path d="M142 2086 Q142 2092 138.5 2095 Q146 2095 151 2089.5 Z" fill="#d7eed7" stroke="none" stroke-width="1" />
<rect x="196.0" y="2049.9" width="54.4" height="54.4" rx="12.5" fill="url(#g_msg)" />
<rect x="204" y="2065.4" width="25.8" height="23.2" rx="5" fill="url(#g_wh)"/>
<path d="M231.6 2073 L240 2066.5 Q242.4 2065.4 242.4 2068 L242.4 2086 Q242.4 2088.6 240 2087.5 L231.6 2081 Z" fill="#e6f4e6" stroke="none" stroke-width="1" />
<rect x="267.8" y="2049.9" width="54.4" height="54.4" rx="12.5" fill="#f6f6f4" />
<ellipse cx="295" cy="2064.4" rx="6.6" ry="11.3" fill="#f39a2d" opacity="0.82" transform="rotate(0 295 2077.3)"/>
<ellipse cx="295" cy="2064.4" rx="6.6" ry="11.3" fill="#e9d23a" opacity="0.82" transform="rotate(45 295 2077.3)"/>
<ellipse cx="295" cy="2064.4" rx="6.6" ry="11.3" fill="#b6cf3f" opacity="0.82" transform="rotate(90 295 2077.3)"/>
<ellipse cx="295" cy="2064.4" rx="6.6" ry="11.3" fill="#59b86a" opacity="0.82" transform="rotate(135 295 2077.3)"/>
<ellipse cx="295" cy="2064.4" rx="6.6" ry="11.3" fill="#4f9ed8" opacity="0.82" transform="rotate(180 295 2077.3)"/>
<ellipse cx="295" cy="2064.4" rx="6.6" ry="11.3" fill="#6b7fd6" opacity="0.82" transform="rotate(225 295 2077.3)"/>
<ellipse cx="295" cy="2064.4" rx="6.6" ry="11.3" fill="#b071c9" opacity="0.82" transform="rotate(270 295 2077.3)"/>
<ellipse cx="295" cy="2064.4" rx="6.6" ry="11.3" fill="#e8584e" opacity="0.82" transform="rotate(315 295 2077.3)"/>
<rect x="338.0" y="2049.9" width="54.4" height="54.4" rx="12.5" fill="#f5f3ef" />
<path d="M338 2063.4 L338 2062 Q338 2049.9 350.5 2049.9 L380 2049.9 Q392.4 2049.9 392.4 2062 L392.4 2063.4 Z" fill="#f6cd43" stroke="none" stroke-width="1" />
<rect x="338.0" y="2072.5" width="54.4" height="0.9" fill="#d9d6d0" />
<rect x="338.0" y="2081.8" width="54.4" height="0.9" fill="#d9d6d0" />
<rect x="338.0" y="2091.0" width="54.4" height="0.9" fill="#d9d6d0" />
<linearGradient id="g_tv" x1="0" y1="0" x2="0" y2="1"><stop offset="0" stop-color="#1b211f"/><stop offset="1" stop-color="#0b0e0d"/></linearGradient>
<rect x="409.9" y="2049.9" width="54.4" height="54.4" rx="12.5" fill="url(#g_tv)" />
<path d="M425 2068 q3.2 -2.2 6 -0.4 q-4 2.6 -3.6 6.6 q0.4 3.6 4 5.2 q-1.8 5 -4.8 5.4 q-1.6 0.2 -3 -0.7 q-1.5 0.9 -3.2 0.7 q-3.6 -1 -4.8 -7.4 q-0.8 -6 3 -8.4 q2 -1 3.6 -0.2 q1.5 0.5 2.8 -0.8 Z M424 2066.5 q0 -3.4 3.4 -4.6 q0.4 3.4 -3.4 4.6 Z" fill="#f2f2f2" stroke="none" stroke-width="1" />
<text transform="translate(434.5,2085.5) scale(0.9606,1)" textLength="21.3" lengthAdjust="spacing" font-family="Liberation Sans, sans-serif" font-size="24" font-weight="bold" fill="#f2f2f2" >tv</text>
<linearGradient id="g_mu" x1="0" y1="0" x2="0" y2="1"><stop offset="0" stop-color="#f45f6b"/><stop offset="1" stop-color="#df3148"/></linearGradient>
<rect x="482.2" y="2049.9" width="54.4" height="54.4" rx="12.5" fill="url(#g_mu)" />
<path d="M501.5 2062.5 L521 2058 L521 2086 a5.6 4.6 0 1 1 -3.2 -4.2 L517.8 2067 L504.7 2070 L504.7 2090 a5.6 4.6 0 1 1 -3.2 -4.2 Z" fill="#ffffff" stroke="none" stroke-width="1" />
<linearGradient id="g_as" x1="0" y1="0" x2="0" y2="1"><stop offset="0" stop-color="#3fa0ea"/><stop offset="1" stop-color="#1c70df"/></linearGradient>
<rect x="551.8" y="2049.9" width="54.4" height="54.4" rx="12.5" fill="url(#g_as)" />
<path d="M572 2092 L583.5 2071.5 M579 2062 L596.5 2092 M585.5 2065.5 L588 2061.5 M561.5 2084.5 L583 2084.5 M591 2084.5 L597 2084.5" fill="none" stroke="#ffffff" stroke-width="4.2" stroke-linecap="round"/>
<linearGradient id="g_se" x1="0" y1="0" x2="0" y2="1"><stop offset="0" stop-color="#cfcfd0"/><stop offset="1" stop-color="#8c8c8e"/></linearGradient>
<rect x="624.0" y="2049.9" width="54.4" height="54.4" rx="12.5" fill="url(#g_se)" />
<circle cx="651.1" cy="2077.2" r="24.6" fill="#58585a"/><circle cx="651.1" cy="2077.2" r="22.6" fill="none" stroke="#8f8f91" stroke-width="2.4" stroke-dasharray="1.6 1.4"/><circle cx="651.1" cy="2077.2" r="16.6" fill="#6a6a6c" stroke="#a9a9ab" stroke-width="2.6"/>
<path d="M651.1 2077.2 L651.1 2060.8 M651.1 2077.2 L665.3 2085.4 M651.1 2077.2 L636.9 2085.4" fill="none" stroke="#a9a9ab" stroke-width="2.6" />
<circle cx="651.1" cy="2077.2" r="3.2" fill="#a9a9ab"/>
<linearGradient id="g_qt" x1="0" y1="0" x2="0" y2="1"><stop offset="0" stop-color="#2a2a2d"/><stop offset="1" stop-color="#0d0d0f"/></linearGradient>
<rect x="694.0" y="2049.9" width="54.4" height="54.4" rx="12.5" fill="url(#g_qt)" />
<linearGradient id="g_qr" x1="0" y1="0" x2="0" y2="1"><stop offset="0" stop-color="#f2f4f7"/><stop offset="1" stop-color="#8e949c"/></linearGradient>
<circle cx="720.6" cy="2076.2" r="17.2" fill="none" stroke="url(#g_qr)" stroke-width="9"/><circle cx="720.6" cy="2076.2" r="12.8" fill="#2b8de9"/><circle cx="720.6" cy="2079" r="8" fill="#37c3ea" opacity="0.8"/>
<path d="M722 2078 L740 2098" fill="none" stroke="#c9ccd2" stroke-width="9" stroke-linecap="round"/>
<circle cx="793" cy="2076.8" r="32.6" fill="#24222a"/>
<linearGradient id="g_ball" x1="0" y1="0" x2="1" y2="0"><stop offset="0" stop-color="#40e0b0"/><stop offset="0.2" stop-color="#4a8ae6"/><stop offset="0.5" stop-color="#5672e8"/><stop offset="0.68" stop-color="#b954e4"/><stop offset="0.82" stop-color="#e840d8"/><stop offset="1" stop-color="#e83ec0"/></linearGradient>
<clipPath id="ballc"><circle cx="793" cy="2076.8" r="27.6"/></clipPath><g clip-path="url(#ballc)"><rect x="760" y="2040" width="70" height="70" fill="url(#g_ball)" transform="rotate(12 793 2077)"/><path d="M762 2078 Q768 2056 792 2047 L760 2040 Z" fill="#f0a23a"/><path d="M767 2073 Q775 2057 787 2052" fill="none" stroke="#e85ad0" stroke-width="4.5"/><path d="M770 2100 Q766 2070 786 2054 Q800 2046 806 2050" fill="none" stroke="#46e0b4" stroke-width="6" opacity="0.85"/></g>
<linearGradient id="g_ar" x1="0" y1="0" x2="0" y2="1"><stop offset="0" stop-color="#72c2c5"/><stop offset="1" stop-color="#2a8c92"/></linearGradient>
<rect x="835.9" y="2049.9" width="54.4" height="54.4" rx="12.5" fill="url(#g_ar)" />
<path d="M863 2077.5 C858 2070 852 2068.5 848.5 2070.5 C843.5 2073.5 843.5 2081.5 848.5 2084.5 C852 2086.5 858 2085 863 2077.5 C868 2070 874 2068.5 877.5 2070.5 C882.5 2073.5 882.5 2081.5 877.5 2084.5 C874 2086.5 868 2085 863 2077.5 Z" fill="none" stroke="#eef8f8" stroke-width="4.4" />
<path d="M849.6 2077.5 L855.6 2077.5 M870.6 2077.5 L876.6 2077.5 M873.6 2074.5 L873.6 2080.5" fill="none" stroke="#eef8f8" stroke-width="1.8" />
<linearGradient id="g_pu" x1="0" y1="0" x2="0" y2="1"><stop offset="0" stop-color="#5c2fe2"/><stop offset="1" stop-color="#3711ad"/></linearGradient>
<rect x="907.4" y="2049.9" width="54.8" height="54.8" rx="12.5" fill="url(#g_pu)" />
<circle cx="934.9" cy="2076.8" r="18.4" fill="#2b0ab4" stroke="#e9e2fb" stroke-width="3.2"/><circle cx="926.2" cy="2066.6" r="8.4" fill="#f1ecfc"/>
<rect x="973.3" y="2043.2" width="67.6" height="70" fill="#8b9362" stroke="#0a0a08" stroke-width="2.4"/>
<line x1="1007.1" y1="2043.2" x2="1007.1" y2="2110.0" stroke="#0a0a08" stroke-width="2.6" />
<line x1="986.1" y1="2055.8" x2="1028.1" y2="2097.8" stroke="#0a0a08" stroke-width="3.4" />
<line x1="986.1" y1="2097.8" x2="1028.1" y2="2055.8" stroke="#0a0a08" stroke-width="3.4" />
<rect x="981.7" y="2051.4" width="9.6" height="9.6" fill="#0a0a08" />
<rect x="981.7" y="2092.6" width="9.6" height="9.6" fill="#0a0a08" />
<rect x="1022.9" y="2051.4" width="9.6" height="9.6" fill="#0a0a08" />
<rect x="1022.9" y="2092.6" width="9.6" height="9.6" fill="#0a0a08" />
<circle cx="1007.1" cy="2076.8" r="14.3" fill="#fbfbf9" stroke="#0a0a08" stroke-width="3.2"/>
<rect x="1003.1" y="2072.8" width="8.0" height="8.0" fill="#0a0a08" />
<rect x="1289.1" y="2043.2" width="67.6" height="70" fill="#8b9362" stroke="#0a0a08" stroke-width="2.4"/>
<line x1="1322.9" y1="2043.2" x2="1322.9" y2="2110.0" stroke="#0a0a08" stroke-width="2.6" />
<line x1="1301.9" y1="2055.8" x2="1343.9" y2="2097.8" stroke="#0a0a08" stroke-width="3.4" />
<line x1="1301.9" y1="2097.8" x2="1343.9" y2="2055.8" stroke="#0a0a08" stroke-width="3.4" />
<rect x="1297.5" y="2051.4" width="9.6" height="9.6" fill="#0a0a08" />
<rect x="1297.5" y="2092.6" width="9.6" height="9.6" fill="#0a0a08" />
<rect x="1338.7" y="2051.4" width="9.6" height="9.6" fill="#0a0a08" />
<rect x="1338.7" y="2092.6" width="9.6" height="9.6" fill="#0a0a08" />
<circle cx="1322.9" cy="2076.8" r="14.3" fill="#fbfbf9" stroke="#0a0a08" stroke-width="3.2"/>
<rect x="1318.9" y="2072.8" width="8.0" height="8.0" fill="#0a0a08" />
<rect x="1361.4" y="2043.2" width="67.6" height="70" fill="#8b9362" stroke="#0a0a08" stroke-width="2.4"/>
<line x1="1395.2" y1="2043.2" x2="1395.2" y2="2110.0" stroke="#0a0a08" stroke-width="2.6" />
<line x1="1374.2" y1="2055.8" x2="1416.2" y2="2097.8" stroke="#0a0a08" stroke-width="3.4" />
<line x1="1374.2" y1="2097.8" x2="1416.2" y2="2055.8" stroke="#0a0a08" stroke-width="3.4" />
<rect x="1369.8" y="2051.4" width="9.6" height="9.6" fill="#0a0a08" />
<rect x="1369.8" y="2092.6" width="9.6" height="9.6" fill="#0a0a08" />
<rect x="1411.0" y="2051.4" width="9.6" height="9.6" fill="#0a0a08" />
<rect x="1411.0" y="2092.6" width="9.6" height="9.6" fill="#0a0a08" />
<circle cx="1395.2" cy="2076.8" r="14.3" fill="#fbfbf9" stroke="#0a0a08" stroke-width="3.2"/>
<rect x="1391.2" y="2072.8" width="8.0" height="8.0" fill="#0a0a08" />
<rect x="1049.6" y="2049.9" width="54.4" height="54.4" rx="12.5" fill="#f4f4f2" />
<clipPath id="pvc"><rect x="1054" y="2054.3" width="45.6" height="52" rx="8"/></clipPath><g clip-path="url(#pvc)"><rect x="1054" y="2054" width="46" height="25" fill="#92b1e2"/><rect x="1054" y="2078" width="46" height="10" fill="#33507e"/><rect x="1054" y="2086" width="46" height="20" fill="#8d99a8"/></g>
<path d="M1079 2080 L1101 2080 L1099 2086 L1104 2104 L1076 2104 L1081 2086 Z" fill="#19191b" stroke="none" stroke-width="1" />
<ellipse cx="1090" cy="2079.5" rx="11" ry="3.2" fill="#2c2c2f"/>
<path d="M1083 2089 L1097 2089 L1101 2104 L1079 2104 Z" fill="#b9bcc2" stroke="none" stroke-width="1" />
<rect x="1121.7" y="2049.9" width="54.4" height="54.4" rx="12.5" fill="#babbb9" />
<linearGradient id="g_ph" x1="0" y1="0" x2="1" y2="1"><stop offset="0" stop-color="#f0a49c"/><stop offset="0.45" stop-color="#e8c8c4"/><stop offset="0.55" stop-color="#4f8fb4"/><stop offset="1" stop-color="#173a5e"/></linearGradient>
<rect x="1138.2" y="2053.8" width="22" height="47" rx="4.5" fill="url(#g_ph)" stroke="#141416" stroke-width="1.8"/><rect x="1145.5" y="2055.6" width="7.4" height="2.2" rx="1.1" fill="#141416"/>
<rect x="1199.2" y="2046.8" width="1.4" height="57.2" fill="#4d5148" />
<rect x="1444.7" y="2046.8" width="1.4" height="57.2" fill="#5a5a50" />
<rect x="1223.8" y="2049.9" width="54.7" height="54.7" rx="12.5" fill="#f3f3f1" />
<circle cx="1242.5" cy="2068" r="6.6" fill="#efc33c"/>
<path d="M1239.9 2072 L1245.1 2072 L1245.1 2080 L1247.5 2082.5 L1245.1 2085 L1247.5 2087.5 L1245.1 2090 L1242.5 2093 L1239.9 2090 Z" fill="#efc33c" stroke="none" stroke-width="1" />
<circle cx="1248.5" cy="2067.5" r="6.6" fill="#3db45a"/>
<path d="M1245.9 2071.5 L1251.1 2071.5 L1251.1 2079.5 L1253.5 2082.0 L1251.1 2084.5 L1253.5 2087.0 L1251.1 2089.5 L1248.5 2092.5 L1245.9 2089.5 Z" fill="#3db45a" stroke="none" stroke-width="1" />
<circle cx="1256.5" cy="2067" r="6.6" fill="#2f86f0"/>
<path d="M1253.9 2071 L1259.1 2071 L1259.1 2079 L1261.5 2081.5 L1259.1 2084 L1261.5 2086.5 L1259.1 2089 L1256.5 2092 L1253.9 2089 Z" fill="#2f86f0" stroke="none" stroke-width="1" />
<circle cx="1257.5" cy="2064.6" r="1.8" fill="#dcecff"/>
<rect x="1465.5" y="2055.7" width="63.1" height="42.3" fill="#1d1d1e" />
<rect x="1465.5" y="2055.7" width="63.1" height="7.3" fill="#262628" />
<rect x="1477.0" y="2068.0" width="33.0" height="0.9" fill="#6f6f72" opacity="0.55"/>
<rect x="1477.0" y="2071.0" width="33.0" height="0.9" fill="#6f6f72" opacity="0.55"/>
<rect x="1477.0" y="2076.0" width="33.0" height="0.9" fill="#6f6f72" opacity="0.55"/>
<rect x="1477.0" y="2078.5" width="33.0" height="0.9" fill="#6f6f72" opacity="0.55"/>
<rect x="1477.0" y="2081.0" width="33.0" height="0.9" fill="#6f6f72" opacity="0.55"/>
<rect x="1477.0" y="2083.5" width="33.0" height="0.9" fill="#6f6f72" opacity="0.55"/>
<rect x="1477.0" y="2086.0" width="33.0" height="0.9" fill="#6f6f72" opacity="0.55"/>
<rect x="1477.0" y="2090.0" width="33.0" height="0.9" fill="#6f6f72" opacity="0.55"/>
<rect x="1477.0" y="2094.0" width="33.0" height="0.9" fill="#6f6f72" opacity="0.55"/>
<rect x="1507.4" y="2087.4" width="19.8" height="19.8" rx="4.4" fill="#f7f7f7"/>
<rect x="1514.4" y="2090.6" width="10.0" height="13.4" fill="#3a72d4" />
<rect x="1509.8" y="2093.4" width="8.4" height="10.6" fill="#1d4fb0" />
<text x="1510.8" y="2101.4" font-family="Liberation Sans, sans-serif" font-size="7.5" font-weight="bold" fill="#ffffff" text-anchor="start" >W</text>
<rect x="1537.2" y="2054.8" width="63.8" height="44.0" fill="#f4f4f4" />
<rect x="1537.2" y="2054.8" width="63.8" height="2.6" fill="#8a8a8c" />
<rect x="1556.0" y="2062.0" width="40.0" height="0.9" fill="#9aa0b0" opacity="0.6"/>
<rect x="1556.0" y="2067.0" width="40.0" height="0.9" fill="#9aa0b0" opacity="0.6"/>
<rect x="1556.0" y="2070.0" width="40.0" height="0.9" fill="#9aa0b0" opacity="0.6"/>
<rect x="1556.0" y="2073.0" width="40.0" height="0.9" fill="#9aa0b0" opacity="0.6"/>
<rect x="1556.0" y="2076.0" width="40.0" height="0.9" fill="#9aa0b0" opacity="0.6"/>
<rect x="1556.0" y="2079.0" width="40.0" height="0.9" fill="#9aa0b0" opacity="0.6"/>
<rect x="1556.0" y="2082.0" width="40.0" height="0.9" fill="#9aa0b0" opacity="0.6"/>
<rect x="1556.0" y="2087.0" width="40.0" height="0.9" fill="#9aa0b0" opacity="0.6"/>
<rect x="1556.0" y="2090.0" width="40.0" height="0.9" fill="#9aa0b0" opacity="0.6"/>
<rect x="1552.0" y="2094.5" width="46.0" height="0.9" fill="#e6a0a0" opacity="0.7"/>
<rect x="1552.0" y="2097.0" width="46.0" height="0.9" fill="#e6a0a0" opacity="0.7"/>
<circle cx="1588.8" cy="2097.2" r="9.6" fill="#f3f3f3"/><circle cx="1588.8" cy="2097.2" r="8.2" fill="#2f8be6"/>
<path d="M1593.8 2091.6 L1590.0 2098.3999999999996 L1587.6 2096.0 Z" fill="#f04a3c" stroke="none" stroke-width="1" />
<path d="M1583.8 2102.7999999999997 L1590.0 2098.3999999999996 L1587.6 2096.0 Z" fill="#f4f4f4" stroke="none" stroke-width="1" />
<rect x="1607.3" y="2060.6" width="63.7" height="32.1" fill="#1f1f20" />
<rect x="1607.3" y="2060.6" width="63.7" height="5.9" fill="#29292b" />
<rect x="1622.0" y="2070.5" width="33.0" height="0.9" fill="#7a7a7e" opacity="0.5"/>
<rect x="1622.0" y="2072.5" width="33.0" height="0.9" fill="#7a7a7e" opacity="0.5"/>
<rect x="1622.0" y="2076.0" width="33.0" height="0.9" fill="#7a7a7e" opacity="0.5"/>
<rect x="1622.0" y="2078.5" width="33.0" height="0.9" fill="#7a7a7e" opacity="0.5"/>
<rect x="1622.0" y="2081.0" width="33.0" height="0.9" fill="#7a7a7e" opacity="0.5"/>
<rect x="1622.0" y="2085.0" width="33.0" height="0.9" fill="#7a7a7e" opacity="0.5"/>
<rect x="1622.0" y="2088.0" width="33.0" height="0.9" fill="#7a7a7e" opacity="0.5"/>
<rect x="1649.5" y="2087.4" width="19.8" height="19.8" rx="4.4" fill="#f7f7f7"/>
<rect x="1656.5" y="2090.6" width="10.0" height="13.4" fill="#3a72d4" />
<rect x="1651.9" y="2093.4" width="8.4" height="10.6" fill="#1d4fb0" />
<text x="1652.9" y="2101.4" font-family="Liberation Sans, sans-serif" font-size="7.5" font-weight="bold" fill="#ffffff" text-anchor="start" >W</text>
<rect x="1680.7" y="2045.2" width="61.3" height="58.8" fill="#1b1b1d" />
<rect x="1680.7" y="2045.2" width="7.7" height="58.8" fill="#242428" />
<linearGradient id="g_pho" x1="0" y1="0" x2="1" y2="1"><stop offset="0" stop-color="#4a3e32"/><stop offset="0.42" stop-color="#a4a8ad"/><stop offset="0.7" stop-color="#64686e"/><stop offset="1" stop-color="#2a2a2e"/></linearGradient>
<rect x="1712.0" y="2048.6" width="29.0" height="26.4" fill="url(#g_pho)" />
<rect x="1689.5" y="2078.6" width="16.5" height="1.8" fill="#50545e" />
<rect x="1689.5" y="2083.2" width="12.5" height="1.8" fill="#50545e" />
<rect x="1681.6" y="2083.5" width="6.0" height="5.5" fill="#3a62c8" />
<rect x="1721.3" y="2087.4" width="20.2" height="20.2" rx="4.6" fill="#4fd25d"/><ellipse cx="1731.4" cy="2097" rx="7" ry="5.8" fill="#f0fbf0"/>
<rect x="1750.8" y="2058.3" width="64.2" height="37.9" fill="#e9e9e8" />
<rect x="1750.8" y="2058.3" width="64.2" height="2.7" fill="#8f9496" />
<rect x="1750.8" y="2061.0" width="64.2" height="7.5" fill="#aeb6b8" />
<rect x="1793.0" y="2062.5" width="11.0" height="9.5" fill="#b89a80" />
<rect x="1764.0" y="2072.0" width="26.0" height="0.9" fill="#9ab0d0" opacity="0.7"/>
<rect x="1764.0" y="2076.0" width="26.0" height="0.9" fill="#9ab0d0" opacity="0.7"/>
<rect x="1764.0" y="2080.0" width="26.0" height="0.9" fill="#9ab0d0" opacity="0.7"/>
<rect x="1764.0" y="2084.0" width="26.0" height="0.9" fill="#9ab0d0" opacity="0.7"/>
<rect x="1764.0" y="2088.0" width="26.0" height="0.9" fill="#9ab0d0" opacity="0.7"/>
<rect x="1764.0" y="2092.0" width="26.0" height="0.9" fill="#9ab0d0" opacity="0.7"/>
<rect x="1794.0" y="2076.0" width="18.0" height="0.9" fill="#b0b6c0" opacity="0.7"/>
<rect x="1794.0" y="2082.0" width="18.0" height="0.9" fill="#b0b6c0" opacity="0.7"/>
<rect x="1794.0" y="2088.0" width="18.0" height="0.9" fill="#b0b6c0" opacity="0.7"/>
<circle cx="1803" cy="2097.2" r="9.6" fill="#f3f3f3"/><circle cx="1803" cy="2097.2" r="8.2" fill="#2f8be6"/>
<path d="M1808 2091.6 L1804.2 2098.3999999999996 L1801.8 2096.0 Z" fill="#f04a3c" stroke="none" stroke-width="1" />
<path d="M1798 2102.7999999999997 L1804.2 2098.3999999999996 L1801.8 2096.0 Z" fill="#f4f4f4" stroke="none" stroke-width="1" />
<rect x="1820.8" y="2057.0" width="64.2" height="40.0" fill="#efefee" />
<rect x="1820.8" y="2057.0" width="64.2" height="4.6" fill="#3a3a3c" />
<rect x="1822.0" y="2068.5" width="62.0" height="3.5" fill="#cfe2c8" />
<rect x="1823.5" y="2073.6" width="14.0" height="2.6" fill="#9a9a9c" />
<rect x="1823.5" y="2077.4" width="14.0" height="2.6" fill="#9a9a9c" />
<rect x="1823.5" y="2081.2" width="14.0" height="2.6" fill="#9a9a9c" />
<rect x="1823.5" y="2088.8" width="14.0" height="2.6" fill="#9a9a9c" />
<rect x="1823.5" y="2092.6" width="14.0" height="2.6" fill="#9a9a9c" />
<rect x="1823.5" y="2085.0" width="14.0" height="2.6" fill="#0c0c0c" />
<rect x="1843.0" y="2073.0" width="13.0" height="2.4" fill="#3a3a3c" />
<rect x="1843.0" y="2078.0" width="6.0" height="2.0" fill="#2a2a2c" />
<rect x="1845.0" y="2081.0" width="31.0" height="16.0" fill="#f9f9f9" />
<circle cx="1873.2" cy="2097.2" r="9.6" fill="#f3f3f3"/><circle cx="1873.2" cy="2097.2" r="8.2" fill="#2f8be6"/>
<path d="M1878.2 2091.6 L1874.4 2098.3999999999996 L1872.0 2096.0 Z" fill="#f04a3c" stroke="none" stroke-width="1" />
<path d="M1868.2 2102.7999999999997 L1874.4 2098.3999999999996 L1872.0 2096.0 Z" fill="#f4f4f4" stroke="none" stroke-width="1" />
<rect x="1893.0" y="2061.0" width="64.0" height="32.2" fill="#2b2b2d" />
<rect x="1893.0" y="2061.0" width="64.0" height="2.5" fill="#3a3a3c" />
<rect x="1916.8" y="2064.2" width="25.6" height="14.8" fill="#f4f4f4" />
<rect x="1893.0" y="2063.5" width="13.0" height="29.7" fill="#262628" />
<rect x="1945.0" y="2063.5" width="12.0" height="29.7" fill="#262628" />
<rect x="1938.3" y="2088.3" width="15.4" height="20" rx="3.6" fill="#141414"/><circle cx="1943.6" cy="2092.8" r="2.6" fill="#f24e1e"/><circle cx="1948.4" cy="2092.8" r="2.6" fill="#ff7262"/><circle cx="1943.6" cy="2097.8" r="2.6" fill="#a259ff"/><circle cx="1948.4" cy="2097.8" r="2.6" fill="#1abcfe"/><circle cx="1943.6" cy="2102.8" r="2.6" fill="#0acf83"/>
<rect x="1963.0" y="2059.7" width="64.2" height="34.7" fill="#242426" />
<rect x="1963.0" y="2059.7" width="64.2" height="3.3" fill="#343436" />
<rect x="1968.0" y="2069.0" width="4.6" height="4.6" fill="#3b39d8" />
<rect x="1974.0" y="2070.5" width="7.0" height="1.2" fill="#5a5a5e" />
<rect x="1983.4" y="2069.0" width="4.6" height="4.6" fill="#3f74d8" />
<rect x="1989.4" y="2070.5" width="7.0" height="1.2" fill="#5a5a5e" />
<rect x="1998.8" y="2069.0" width="4.6" height="4.6" fill="#3f9a5a" />
<rect x="2004.8" y="2070.5" width="7.0" height="1.2" fill="#5a5a5e" />
<rect x="1968.0" y="2077.6" width="4.6" height="4.6" fill="#7a52d8" />
<rect x="1974.0" y="2079.1" width="7.0" height="1.2" fill="#5a5a5e" />
<rect x="1983.4" y="2077.6" width="4.6" height="4.6" fill="#d84a2e" />
<rect x="1989.4" y="2079.1" width="7.0" height="1.2" fill="#5a5a5e" />
<rect x="1998.8" y="2077.6" width="4.6" height="4.6" fill="#c8324a" />
<rect x="2004.8" y="2079.1" width="7.0" height="1.2" fill="#5a5a5e" />
<rect x="1968.0" y="2086.2" width="4.6" height="4.6" fill="#c8682a" />
<rect x="1974.0" y="2087.7" width="7.0" height="1.2" fill="#5a5a5e" />
<rect x="1983.4" y="2086.2" width="4.6" height="4.6" fill="#2e8a7a" />
<rect x="1989.4" y="2087.7" width="7.0" height="1.2" fill="#5a5a5e" />
<rect x="1998.8" y="2086.2" width="4.6" height="4.6" fill="#3a3a4a" />
<rect x="2004.8" y="2087.7" width="7.0" height="1.2" fill="#5a5a5e" />
<rect x="2005.2" y="2087" width="20.4" height="20.4" rx="4.6" fill="#f6f6f8"/>
<rect x="2008.0" y="2092.5" width="8.5" height="8.5" fill="#4b53bc" />
<text x="2010.0" y="2099.6" font-family="Liberation Sans, sans-serif" font-size="7.5" font-weight="bold" fill="#ffffff" text-anchor="start" >T</text>
<circle cx="2019.6" cy="2093.4" r="2.4" fill="#5b63cc"/><rect x="2016.6" y="2096.2" width="6" height="6.6" rx="1.5" fill="#5b63cc"/>
<linearGradient id="g_tr" x1="0" y1="0" x2="1" y2="0"><stop offset="0" stop-color="#7e7e80"/><stop offset="0.5" stop-color="#626264"/><stop offset="1" stop-color="#707072"/></linearGradient>
<path d="M2043.4 2053 L2091.4 2053 L2087 2104 L2048 2104 Z" fill="url(#g_tr)" stroke="none" stroke-width="0" opacity="0.92"/>
<ellipse cx="2067.4" cy="2053" rx="24" ry="5.4" fill="#5c5c5e" stroke="#a4a4a6" stroke-width="1.2"/>
<path d="M2047 2052 L2051 2045.5 L2058 2047.5 L2063 2044 L2070 2047 L2075 2044.5 L2080 2048 L2086 2046.5 L2089 2052 L2080 2056 L2067 2057.5 L2054 2056 Z" fill="#f0f0f0" stroke="none" stroke-width="1" />
<path d="M2058 2049 L2064 2053 L2069 2048.5 Z" fill="#3aa39a" stroke="none" stroke-width="1" />
<path d="M2073 2050 L2079 2054 L2082 2049 Z" fill="#47628f" stroke="none" stroke-width="1" />
<path d="M2052 2051 L2057 2054 L2056 2049.5 Z" fill="#b8b8ba" stroke="none" stroke-width="1" />
</svg>
</body></html>
